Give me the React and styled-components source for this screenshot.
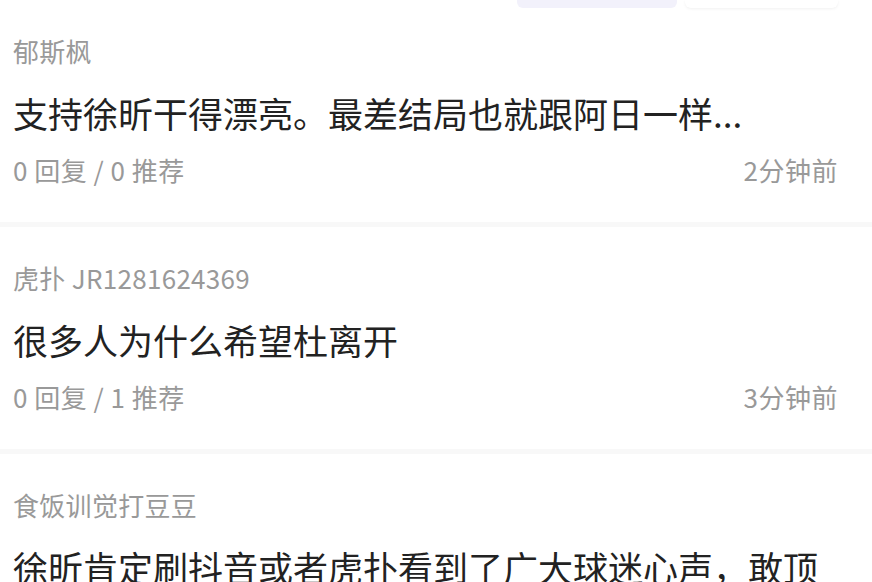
import React from "react";
import styled, { createGlobalStyle } from "styled-components";

const GlobalStyle = createGlobalStyle`
  html, body {
    margin: 0;
    padding: 0;
    background: #ffffff;
  }
  body {
    font-family: "Noto Sans CJK SC", "Noto Sans", sans-serif;
    -webkit-font-smoothing: antialiased;
  }
`;

const Page = styled.div`
  width: 872px;
  height: 582px;
  overflow: hidden;
  background: #ffffff;
`;

const TopBar = styled.div`
  display: flex;
  justify-content: flex-end;
  gap: 8px;
  height: 8px;
  padding-right: 34px;
`;

const TabButton = styled.div`
  width: ${(props) => props.width}px;
  height: 8px;
  border-radius: 0 0 6px 6px;
  background: ${(props) => (props.active ? "#f2f1fb" : "#ffffff")};
  box-shadow: ${(props) =>
    props.active ? "none" : "0 1px 3px rgba(0, 0, 0, 0.06)"};
`;

const List = styled.div`
  display: flex;
  flex-direction: column;
`;

const Item = styled.div`
  display: flex;
  flex-direction: column;
  padding: ${(props) => (props.first ? 28 : 36)}px 34px 37px 13px;
  border-bottom: 5px solid #f8f8f8;
`;

const Author = styled.div`
  font-size: 26px;
  line-height: 30px;
  letter-spacing: 0.3px;
  color: #999999;
`;

const Body = styled.div`
  margin-top: 25px;
  font-size: 35px;
  line-height: 44px;
  color: #222222;
  white-space: nowrap;
`;

const Meta = styled.div`
  margin-top: 20px;
  display: flex;
  justify-content: space-between;
  font-size: 26px;
  line-height: 30px;
  letter-spacing: 0.5px;
  color: #999999;
`;

const posts = [
  {
    author: "郁斯枫",
    body: "支持徐昕干得漂亮。最差结局也就跟阿日一样...",
    replies: 0,
    likes: 0,
    time: "2分钟前",
  },
  {
    author: "虎扑 JR1281624369",
    body: "很多人为什么希望杜离开",
    replies: 0,
    likes: 1,
    time: "3分钟前",
  },
  {
    author: "食饭训觉打豆豆",
    body: "徐昕肯定刷抖音或者虎扑看到了广大球迷心声，敢顶",
    replies: 0,
    likes: 0,
    time: "5分钟前",
  },
];

const App = () => {
  return (
    <Page>
      <GlobalStyle />
      <TopBar>
        <TabButton active width={160} />
        <TabButton width={153} />
      </TopBar>
      <List>
        {posts.map((p, index) => (
          <Item key={index} first={index === 0}>
            <Author>{p.author}</Author>
            <Body>{p.body}</Body>
            <Meta>
              <span>
                {p.replies} 回复 / {p.likes} 推荐
              </span>
              <span>{p.time}</span>
            </Meta>
          </Item>
        ))}
      </List>
    </Page>
  );
};

export default App;
